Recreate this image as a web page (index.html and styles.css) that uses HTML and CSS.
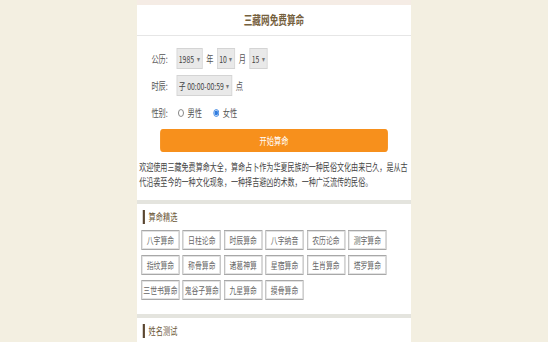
FILE: index.html
```html
<!DOCTYPE html>
<html lang="zh-CN">
<head>
	<meta charset="UTF-8">
	<meta name="viewport" content="width=device-width, initial-scale=1.0">
	<title>三藏网免费算命</title>
	<link rel="stylesheet" href="styles.css">
</head>
<body>
	<div class="page">
		<div class="top-strip"></div>
		<div class="card">
			<h1 class="card-title">三藏网免费算命</h1>
			<form class="form" action="">
				<div class="form-row">
					<label class="form-label">公历:</label>
					<span class="sel"><select name="year"><option>1985</option></select><i>▾</i></span>
					<span class="unit">年</span>
					<span class="sel"><select name="month"><option>10</option></select><i>▾</i></span>
					<span class="unit">月</span>
					<span class="sel"><select name="day"><option>15</option></select><i>▾</i></span>
				</div>
				<div class="form-row">
					<label class="form-label">时辰:</label>
					<span class="sel"><select name="hour"><option>子 00:00-00:59</option></select><i>▾</i></span>
					<span class="unit">点</span>
				</div>
				<div class="form-row">
					<label class="form-label">性别:</label>
					<label class="radio"><input type="radio" name="sex" value="1">男性</label>
					<label class="radio"><input type="radio" name="sex" value="0" checked>女性</label>
				</div>
				<button class="btn-start" type="button">开始算命</button>
			</form>
			<p class="intro">欢迎使用三藏免费算命大全，算命占卜作为华夏民族的一种民俗文化由来已久，是从古代沿袭至今的一种文化现象，一种择吉避凶的术数，一种广泛流传的民俗。</p>
		</div>
		<div class="card">
			<h2 class="sec-title">算命精选</h2>
			<div class="links">
				<a href="#">八字算命</a>
				<a href="#">日柱论命</a>
				<a href="#">时辰算命</a>
				<a href="#">八字纳音</a>
				<a href="#">农历论命</a>
				<a href="#">测字算命</a>
				<a href="#">指纹算命</a>
				<a href="#">称骨算命</a>
				<a href="#">诸葛神算</a>
				<a href="#">星宿算命</a>
				<a href="#">生肖算命</a>
				<a href="#">塔罗算命</a>
				<a href="#">三世书算命</a>
				<a href="#">鬼谷子算命</a>
				<a href="#">九星算命</a>
				<a href="#">摸骨算命</a>
			</div>
		</div>
		<div class="card card-last">
			<h2 class="sec-title">姓名测试</h2>
		</div>
	</div>
</body>
</html>
```

FILE: styles.css
```css
html, body{ margin: 0; padding: 0;}
body{
	background: #f3efe1; overflow: hidden;
	font-family: "Noto Sans CJK SC", "Noto Sans", sans-serif; color: #555;
}
/* 页面按手机宽度排版, 再横向压缩 */
.page{
	width: 380px; margin: 0 auto; background: #e4e4de;
	transform: scaleX(0.7211); transform-origin: center top;
}
.top-strip{ height: 5px; background: #f5ece5;}
.card{ background: #fff; margin-bottom: 4px;}
.card-last{ margin-bottom: 0; height: 26px; overflow: hidden;}

.card-title{
	margin: 0; height: 30px; line-height: 30px; text-align: center;
	font-size: 12px; font-weight: bold; color: #75603d;
	border-bottom: 1px solid #e6e6e6;
}
.form{ padding: 12px 0 0;}
.form-row{
	display: flex; align-items: center; height: 21px; margin-bottom: 6px;
	padding-left: 20px; font-size: 10px;
}
.form-label{ width: 35px; color: #555;}
.sel{
	display: inline-flex; align-items: center; height: 100%; box-sizing: border-box;
	background: #e9e9e9; border: 1px solid #d4d4d4; padding: 0 3px 0 2px;
}
.sel select{
	appearance: none; -webkit-appearance: none; border: 0; background: transparent;
	font-family: inherit; font-size: 9.5px; color: #444; padding: 0; margin: 0;
}
.sel i{ font-style: normal; font-size: 8px; color: #777; margin-left: 3px;}
.unit{ margin: 0 5px; color: #555;}
.radio{ display: inline-flex; align-items: center; margin-right: 14px; color: #555;}
.radio input{
	width: 8px; height: 8px; margin: 0 5px 0 2px; accent-color: #2d7be0;
}
.btn-start{
	display: block; width: 316px; height: 23px; margin: 3px auto 0; padding: 0;
	border: 0; border-radius: 4px; background: #f7901c;
	color: #fff; font-family: inherit; font-size: 10px;
}
.intro{
	margin: 0; padding: 8px 3px 10px; font-size: 9.8px; line-height: 15px; color: #444;
}

.sec-title{
	margin: 0; padding: 6px 0 0 8px; font-size: 10px; font-weight: normal;
	line-height: 14px; color: #6d5a3a;
}
.sec-title::before{
	content: ""; display: inline-block; width: 3px; height: 14px;
	background: #5a4630; vertical-align: top; margin-right: 5px;
}
.links{
	display: grid; grid-template-columns: repeat(6, 53px); gap: 5px 4.4px;
	padding: 6px 0 14px 6px;
}
.links a{
	display: block; height: 20px; line-height: 18px; box-sizing: border-box;
	border: 1px solid #a8a8a8; box-shadow: inset 0 0 0 1px #e2e2e2;
	text-align: center; font-size: 9.5px; color: #666; text-decoration: none;
	white-space: nowrap; overflow: hidden;
}
```
